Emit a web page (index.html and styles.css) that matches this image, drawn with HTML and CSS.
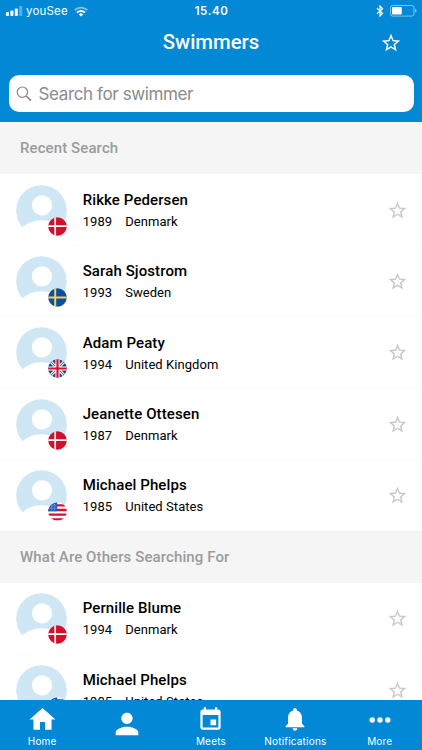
FILE: index.html
```html
<!DOCTYPE html>
<html lang="en">
<head>
    <meta charset="UTF-8">
    <meta name="viewport" content="width=device-width, initial-scale=1.0">
    <title>Swimmers</title>
    <link rel="stylesheet" href="styles.css">
</head>
<body>
    <!-- shared icons -->
    <svg class="sprite" width="0" height="0">
        <symbol id="star" viewBox="0 0 24 24">
            <path d="M22 9.24l-7.19-.62L12 2 9.19 8.63 2 9.24l5.46 4.73L5.82 21 12 17.27 18.18 21l-1.63-7.03L22 9.24zM12 15.4l-3.76 2.27 1-4.28-3.32-2.88 4.38-.38L12 6.1l1.71 4.04 4.38.38-3.32 2.88 1 4.28L12 15.4z"/>
        </symbol>
        <symbol id="avatar" viewBox="0 0 51 51">
            <circle cx="25.5" cy="25.5" r="25.3" fill="#cfe7f5"/>
            <circle cx="26" cy="20.3" r="10.1" fill="#fff"/>
            <path d="M0 51V43L6.5 42.3Q14 35.2 25.5 35.2T45 42.3L51 43V51z" fill="#fff"/>
        </symbol>
        <clipPath id="round"><circle cx="9.5" cy="9.5" r="9.3"/></clipPath>
        <symbol id="dk" viewBox="0 0 19 19">
            <g clip-path="url(#round)">
                <path d="M0 0h19v19H0z" fill="#d40f2c"/>
                <path d="M7.2 0v19M0 9.2h19" stroke="#fff" stroke-width="1.7"/>
            </g>
        </symbol>
        <symbol id="se" viewBox="0 0 19 19">
            <g clip-path="url(#round)">
                <path d="M0 0h19v19H0z" fill="#0b4ea8"/>
                <path d="M7.2 0v19M0 9.4h19" stroke="#f4d54a" stroke-width="2"/>
            </g>
        </symbol>
        <symbol id="gb" viewBox="0 0 19 19">
            <g clip-path="url(#round)">
                <path d="M0 0h19v19H0z" fill="#23408f"/>
                <path d="M0 0l19 19M19 0L0 19" stroke="#fff" stroke-width="3"/>
                <path d="M0 0l19 19M19 0L0 19" stroke="#d8203c" stroke-width="1"/>
                <path d="M9.5 0v19M0 9.5h19" stroke="#fff" stroke-width="4.2"/>
                <path d="M9.5 0v19M0 9.5h19" stroke="#d8102c" stroke-width="2.2"/>
            </g>
        </symbol>
        <symbol id="us" viewBox="0 0 19 19">
            <g clip-path="url(#round)">
                <path d="M0 0h19v19H0z" fill="#fff"/>
                <path d="M0 3.3h19M0 8h19M0 12.7h19M0 17.4h19" stroke="#d8102c" stroke-width="2.3"/>
                <path d="M0 0h9.2v9.2H0z" fill="#1d5fc0"/>
                <path d="M0 3.4h9M0 6.2h9M3.6 0v9M6.4 0v9" stroke="#fff" stroke-width=".5" stroke-dasharray="1 1.2"/>
            </g>
        </symbol>
    </svg>

    <div class="app">
        <header class="header">
            <div class="status-bar">
                <div class="carrier">
                    <svg width="17" height="10" viewBox="0 0 17 10" fill="#fff">
                        <rect x="0" y="6" width="3" height="4" rx=".8"/>
                        <rect x="4.4" y="4.5" width="3" height="5.5" rx=".8"/>
                        <rect x="8.8" y="2.5" width="3" height="7.5" rx=".8"/>
                        <rect x="13.2" y="0" width="3" height="10" rx=".8" opacity=".35"/>
                    </svg>
                    <span class="carrier-name">youSee</span>
                    <svg width="14" height="11" viewBox="0 0 14 11" fill="none" stroke="#fff" stroke-width="1.9">
                        <path d="M.8 4.2a8.8 8.8 0 0 1 12.4 0" opacity=".5"/>
                        <path d="M3 6.6a5.7 5.7 0 0 1 8 0"/>
                        <path d="M7 10.6L4.8 8.4a3.1 3.1 0 0 1 4.4 0z" fill="#fff" stroke="none"/>
                    </svg>
                </div>
                <div class="clock">15.40</div>
                <div class="battery">
                    <svg width="8" height="12" viewBox="0 0 8 12" fill="none" stroke="#fff" stroke-width="1.2">
                        <path d="M1 3.2l5.6 5L4 11V1l2.6 2.8L1 8.8"/>
                    </svg>
                    <svg width="27" height="12" viewBox="0 0 27 12">
                        <rect x=".5" y=".5" width="23.5" height="10.6" rx="2.2" fill="none" stroke="#fff" opacity=".5"/>
                        <rect x="2" y="2" width="9.8" height="7.6" rx="1" fill="#fff"/>
                        <path d="M25 4q1.5.3 1.5 1.8T25 7.6z" fill="#fff" opacity=".5"/>
                    </svg>
                </div>
            </div>
            <div class="title-bar">
                <h1>Swimmers</h1>
                <svg class="title-star"><use href="#star"/></svg>
            </div>
            <div class="search">
                <svg width="16" height="16" viewBox="0 0 16 16" fill="none" stroke="#85858a" stroke-width="1.2">
                    <circle cx="6.4" cy="6.2" r="5.2"/>
                    <path d="M10.2 10l4.8 4.6" stroke-width="1.5"/>
                </svg>
                <span>Search for swimmer</span>
            </div>
        </header>

        <main class="list">
            <h2>Recent Search</h2>
            <div class="swimmer">
                <div class="photo"><svg class="avatar"><use href="#avatar"/></svg><svg class="flag"><use href="#dk"/></svg></div>
                <div class="info">
                    <div class="name">Rikke Pedersen</div>
                    <div class="details"><span>1989</span><span>Denmark</span></div>
                </div>
                <svg class="star"><use href="#star"/></svg>
            </div>
            <div class="swimmer">
                <div class="photo"><svg class="avatar"><use href="#avatar"/></svg><svg class="flag"><use href="#se"/></svg></div>
                <div class="info">
                    <div class="name">Sarah Sjostrom</div>
                    <div class="details"><span>1993</span><span>Sweden</span></div>
                </div>
                <svg class="star"><use href="#star"/></svg>
            </div>
            <div class="swimmer">
                <div class="photo"><svg class="avatar"><use href="#avatar"/></svg><svg class="flag"><use href="#gb"/></svg></div>
                <div class="info">
                    <div class="name">Adam Peaty</div>
                    <div class="details"><span>1994</span><span>United Kingdom</span></div>
                </div>
                <svg class="star"><use href="#star"/></svg>
            </div>
            <div class="swimmer">
                <div class="photo"><svg class="avatar"><use href="#avatar"/></svg><svg class="flag"><use href="#dk"/></svg></div>
                <div class="info">
                    <div class="name">Jeanette Ottesen</div>
                    <div class="details"><span>1987</span><span>Denmark</span></div>
                </div>
                <svg class="star"><use href="#star"/></svg>
            </div>
            <div class="swimmer">
                <div class="photo"><svg class="avatar"><use href="#avatar"/></svg><svg class="flag"><use href="#us"/></svg></div>
                <div class="info">
                    <div class="name">Michael Phelps</div>
                    <div class="details"><span>1985</span><span>United States</span></div>
                </div>
                <svg class="star"><use href="#star"/></svg>
            </div>

            <h2>What Are Others Searching For</h2>
            <div class="swimmer">
                <div class="photo"><svg class="avatar"><use href="#avatar"/></svg><svg class="flag"><use href="#dk"/></svg></div>
                <div class="info">
                    <div class="name">Pernille Blume</div>
                    <div class="details"><span>1994</span><span>Denmark</span></div>
                </div>
                <svg class="star"><use href="#star"/></svg>
            </div>
            <div class="swimmer">
                <div class="photo"><svg class="avatar"><use href="#avatar"/></svg><svg class="flag"><use href="#us"/></svg></div>
                <div class="info">
                    <div class="name">Michael Phelps</div>
                    <div class="details"><span>1985</span><span>United States</span></div>
                </div>
                <svg class="star"><use href="#star"/></svg>
            </div>
        </main>

        <nav class="tabs">
            <div class="tab">
                <svg class="home" width="31" height="31" viewBox="0 0 24 24"><path d="M10 20v-6h4v6h5v-8h3L12 3 2 12h3v8z"/></svg>
                <span>Home</span>
            </div>
            <div class="tab tab-profile">
                <svg width="34" height="34" viewBox="0 0 24 24"><path d="M12 12c2.21 0 4-1.79 4-4s-1.79-4-4-4-4 1.79-4 4 1.79 4 4 4zm0 2c-2.67 0-8 1.34-8 4v2h16v-2c0-2.66-5.33-4-8-4z"/></svg>
            </div>
            <div class="tab">
                <svg class="meets" width="27" height="27" viewBox="0 0 24 24"><path d="M17 12h-5v5h5v-5zM16 1v2H8V1H6v2H5c-1.11 0-1.99.9-1.99 2L3 19c0 1.1.89 2 2 2h14c1.1 0 2-.9 2-2V5c0-1.1-.9-2-2-2h-1V1h-2zm3 18H5V8h14v11z"/></svg>
                <span>Meets</span>
            </div>
            <div class="tab">
                <svg class="bell" width="28" height="28" viewBox="0 0 24 24"><path d="M12 22c1.1 0 2-.9 2-2h-4c0 1.1.89 2 2 2zm6-6v-5c0-3.07-1.64-5.64-4.5-6.32V4c0-.83-.67-1.5-1.5-1.5s-1.5.67-1.5 1.5v.68C7.63 5.36 6 7.92 6 11v5l-2 2v1h16v-1l-2-2z"/></svg>
                <span>Notifications</span>
            </div>
            <div class="tab">
                <svg class="dots" width="22" height="28" viewBox="0 0 22 28"><circle cx="3.2" cy="14" r="2.7"/><circle cx="11" cy="14" r="2.7"/><circle cx="18.8" cy="14" r="2.7"/></svg>
                <span>More</span>
            </div>
        </nav>
    </div>
</body>
</html>
```
FILE: styles.css
```css
body {
    margin: 0;
    font-family: Roboto, sans-serif;
    background: #ffffff;
    color: #000000;
}

.sprite {
    position: absolute;
}

.app {
    display: flex;
    flex-direction: column;
    height: 750px;
    overflow: hidden;
}

.header {
    flex: none;
    height: 122.4px;
    background: #0288d4;
    color: #ffffff;
}

.status-bar {
    display: grid;
    grid-template-columns: 1fr auto 1fr;
    align-items: center;
    height: 22px;
    padding: 0 5px 0 6px;
    font-family: Inter, sans-serif;
    font-size: 11.5px;
}

.carrier,
.battery {
    display: flex;
    align-items: center;
}

.carrier-name {
    margin: 0 6px 0 3px;
    letter-spacing: 0.2px;
}

.clock {
    font-weight: 600;
    letter-spacing: 0.6px;
}

.battery {
    justify-content: flex-end;
    gap: 6px;
}

.title-bar {
    display: grid;
    grid-template-columns: 1fr auto 1fr;
    align-items: center;
    height: 42px;
    padding: 0 20px;
}

h1 {
    grid-column: 2;
    margin: -2px 0 0;
    font-size: 20.3px;
    font-weight: 500;
}

.title-star {
    justify-self: end;
    width: 22px;
    height: 22px;
    fill: #ffffff;
}

.search {
    display: flex;
    align-items: center;
    gap: 7px;
    box-sizing: border-box;
    height: 37px;
    margin: 11.4px 8.5px 0;
    padding: 0 7px;
    border-radius: 10px;
    background: #ffffff;
    color: #8a8a8f;
    font-size: 17px;
    letter-spacing: -0.38px;
    font-family: Inter, sans-serif;
}

.list {
    flex: 1;
    min-height: 0;
    overflow: hidden;
}

h2 {
    height: 52px;
    margin: 0;
    padding-left: 20px;
    background: #f5f5f5;
    color: #9b9b9b;
    font-size: 15px;
    font-weight: 500;
    letter-spacing: 0.1px;
    line-height: 53.5px;
}

.swimmer {
    display: flex;
    align-items: center;
    box-sizing: border-box;
    height: 71.3px;
    padding: 1.5px 14px 0 15.5px;
    border-bottom: 1px solid #fbfbfb;
}

.photo {
    position: relative;
    width: 51px;
    height: 51px;
    margin-right: 16.2px;
}

.avatar {
    display: block;
    width: 51px;
    height: 51px;
}

.flag {
    position: absolute;
    left: 32.3px;
    top: 32px;
    width: 19px;
    height: 19px;
}

.info {
    flex: 1;
    padding-top: 1.4px;
}

.name {
    font-size: 15px;
    font-weight: 500;
    letter-spacing: 0.1px;
    line-height: 20px;
}

.details {
    display: flex;
    gap: 13px;
    font-size: 13px;
    letter-spacing: 0.06px;
    line-height: 20px;
    margin-top: 2px;
}

.star {
    width: 21px;
    height: 21px;
    fill: #c7c7cc;
}

.tabs {
    display: grid;
    grid-template-columns: repeat(5, 84.4px);
    flex: none;
    height: 50.5px;
    background: #0288d4;
    color: #ffffff;
    font-family: Inter, sans-serif;
    font-size: 10px;
    letter-spacing: 0.2px;
}

.tab {
    display: grid;
    grid-template-rows: 35px 13px;
    place-items: center;
    align-content: start;
}

.tab svg {
    fill: #ffffff;
}

.tab .home {
    margin-top: 5px;
}

.tab .meets {
    margin-top: 5px;
}

.tab .bell {
    margin-top: 4px;
}

.tab .dots {
    margin-top: 5px;
}

.tab-profile {
    grid-template-rows: 48px;
}
```
